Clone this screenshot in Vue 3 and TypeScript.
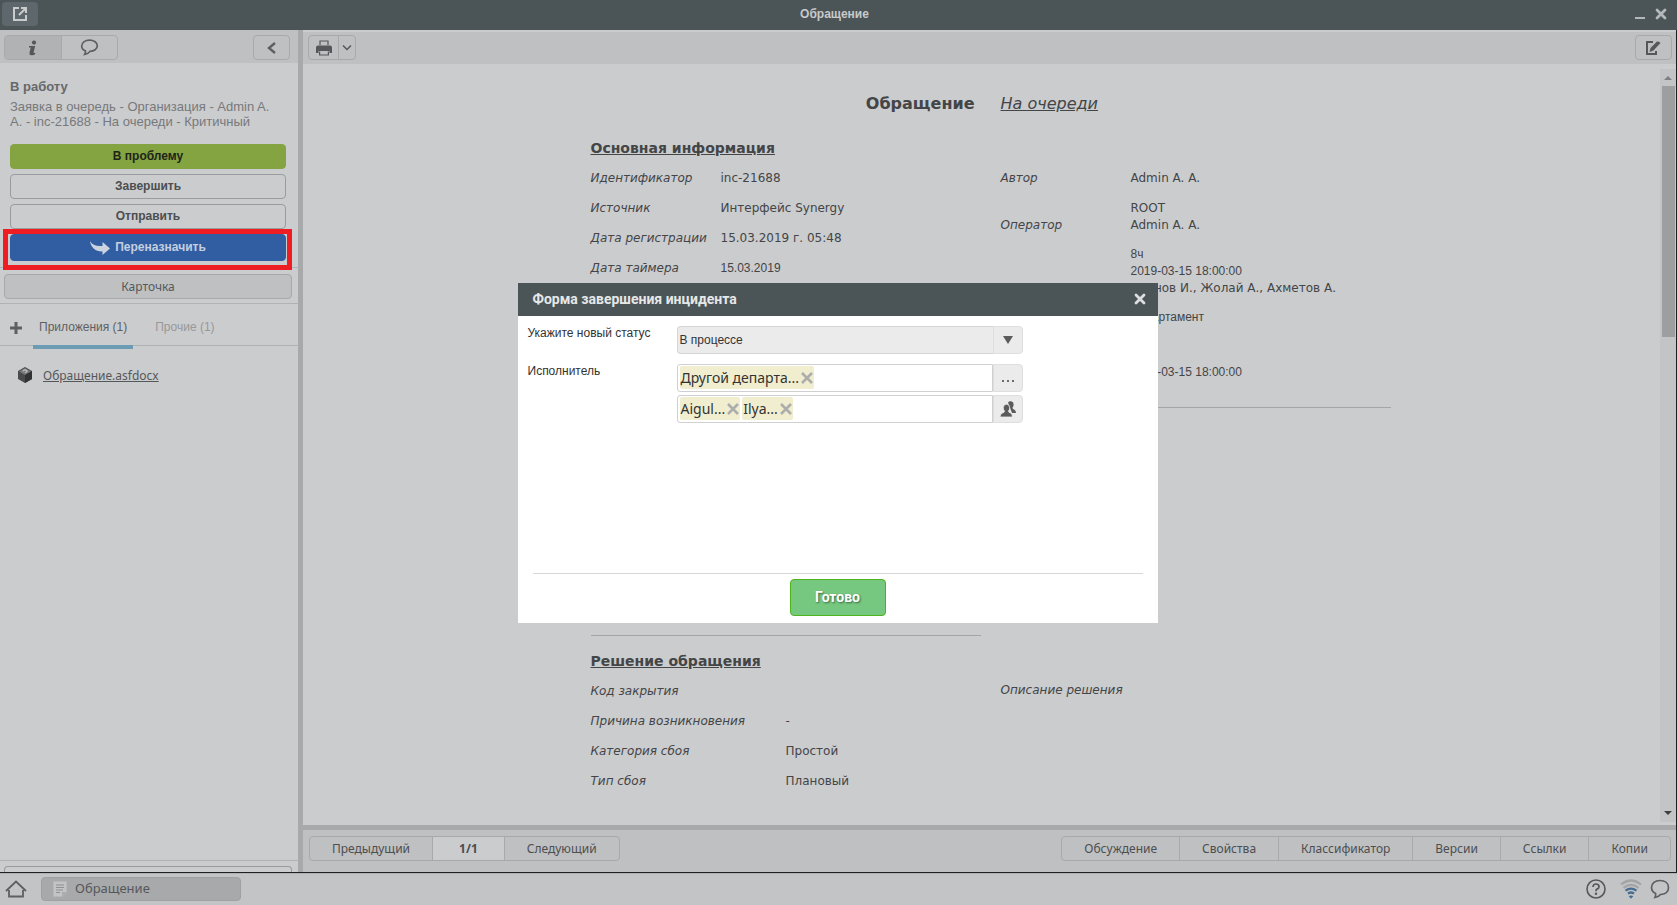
<script setup lang="ts">
import { ref } from 'vue'

interface Field { label: string; value: string; compact?: boolean }

const mainFields: Field[] = [
  { label: 'Идентификатор', value: 'inc-21688' },
  { label: 'Источник', value: 'Интерфейс Synergy' },
  { label: 'Дата регистрации', value: '15.03.2019 г. 05:48' },
  { label: 'Дата таймера', value: '15.03.2019', compact: true },
]
const solutionFields: Field[] = [
  { label: 'Код закрытия', value: '' },
  { label: 'Причина возникновения', value: '-' },
  { label: 'Категория сбоя', value: 'Простой' },
  { label: 'Тип сбоя', value: 'Плановый' },
]
const links = ['Обсуждение', 'Свойства', 'Классификатор', 'Версии', 'Ссылки', 'Копии']
const status = ref('В процессе')
const departments = ref(['Другой департа...'])
const people = ref(['Aigul...', 'Ilya...'])
</script>

<template>
  <div class="app">
    <header class="titlebar">
      <button class="open-btn" aria-label="Открыть в новом окне">
        <svg width="16" height="16" viewBox="0 0 16 16"><path d="M7 2H2v12h12V9M9 2h5v5M14 2 7 9" fill="none" stroke="#c8cacb" stroke-width="2" /></svg>
      </button>
      <h1>Обращение</h1>
      <div class="win-btns">
        <button aria-label="Свернуть"><svg width="12" height="12" viewBox="0 0 12 12"><path d="M1 10h10" stroke="#b4b8ba" stroke-width="2" /></svg></button>
        <button aria-label="Закрыть"><svg width="12" height="12" viewBox="0 0 12 12"><path d="m2 2 8 8M10 2l-8 8" stroke="#b4b8ba" stroke-width="2.8" stroke-linecap="round" /></svg></button>
      </div>
    </header>

    <div class="workspace">
      <aside class="sidebar">
        <div class="side-tools">
          <div class="seg">
            <button class="active" aria-label="Информация">
              <svg width="14" height="16" viewBox="0 0 14 16"><circle cx="8" cy="2.6" r="2.1" fill="#55585b" /><path d="M3 6h6.2L7.6 12.2q-.2 1.1 1.4.6l.4.9Q8 15.600 5 15.200q-2-.4-1.500-2.500L4.700 7.600H3z" fill="#55585b" /></svg>
            </button>
            <button aria-label="Комментарии">
              <svg width="19" height="17" viewBox="0 0 19 17"><path d="M9.500 1.200c4.500 0 7.800 2.400 7.800 5.600s-3.300 5.600-7.300 5.600c-1 1.500-3 2.800-5.300 3 .7-1 .9-2.300.7-3.500-2.300-1-3.700-2.900-3.700-5 0-3.300 3.300-5.700 7.800-5.700z" fill="none" stroke="#5d6063" stroke-width="1.700" /></svg>
            </button>
          </div>
          <button class="collapse" aria-label="Свернуть панель"><svg width="10" height="12" viewBox="0 0 10 12"><path d="M8 1 2 6l6 5" fill="none" stroke="#5d6063" stroke-width="2.400" /></svg></button>
        </div>

        <section class="task">
          <h2>В работу</h2>
          <p>Заявка в очередь - Организация - Admin A. A. - inc-21688 - На очереди - Критичный</p>
          <div class="actions">
            <button class="act green">В проблему</button>
            <button class="act">Завершить</button>
            <button class="act">Отправить</button>
            <div class="marked">
              <button class="act blue">
                <svg width="20" height="14" viewBox="0 0 20 14"><path d="M0 0c2 4 6 5.500 12.500 5V1L20 7.500 12.500 14v-3.500C6 10.800 1 7 0 0z" fill="#cbd3de" /></svg>
                Переназначить
              </button>
            </div>
          </div>
        </section>

        <div class="card-row"><button class="card-btn">Карточка</button></div>

        <nav class="tabs">
          <button class="add" aria-label="Добавить"><svg width="14" height="14" viewBox="0 0 14 14"><path d="M7 1v12M1 7h12" stroke="#5d6063" stroke-width="3" /></svg></button>
          <button class="tab current">Приложения (1)</button>
          <button class="tab">Прочие (1)</button>
        </nav>

        <div class="file">
          <svg width="16" height="18" viewBox="0 0 16 18"><path d="m8 1 7 4v8l-7 4-7-4V5z" fill="#484a4c" /><path d="m8 2 6 3.500L8 9 2 5.500z" fill="#77797b" /><path d="M6 5q2-2 3.500-.5T8 6.500" fill="none" stroke="#c4c5c7" stroke-width="1.200" /><path d="M8 9v8l7-4V5z" fill="#303234" /></svg>
          <a href="#">Обращение.asfdocx</a>
        </div>

        <div class="side-bottom"><div class="stub"></div></div>
      </aside>

      <main class="main">
        <div class="toolbar">
          <div class="seg print">
            <button aria-label="Печать"><svg width="16" height="16" viewBox="0 0 16 16"><path d="M4 5V1h8v4" fill="none" stroke="#55585b" stroke-width="1.200" /><path d="M2 5.500h12q2 0 2 2V13h-2.500v-2h-11v2H0V7.500q0-2 2-2z" fill="#55585b" /><path d="M3.600 11.500v3.500h8.800v-3.500" fill="none" stroke="#55585b" stroke-width="1.200" /></svg></button>
            <button aria-label="Ещё"><svg width="10" height="8" viewBox="0 0 10 8"><path d="m1 1.500 4 4 4-4" fill="none" stroke="#55585b" stroke-width="1.500" /></svg></button>
          </div>
          <button class="edit" aria-label="Редактировать"><svg width="15" height="14" viewBox="0 0 15 14"><path d="M7 1H1v12h9v-3" fill="none" stroke="#55585b" stroke-width="2" /><path d="M3.500 11 4.500 7 11 .6q2-.8 3.500 1.500L7.500 9.500z" fill="#55585b" /></svg></button>
        </div>

        <div class="scroller">
          <article class="doc">
            <div class="doc-head"><strong>Обращение</strong><em>На очереди</em></div>
            <div class="doc-cols">
              <section class="col info">
                <h3>Основная информация</h3>
                <dl class="fields">
                  <template v-for="f in mainFields" :key="f.label">
                    <dt>{{ f.label }}</dt><dd :class="{ compact: f.compact }">{{ f.value }}</dd>
                  </template>
                </dl>
              </section>
              <section class="col">
                <dl class="people">
                  <dt>Автор</dt>
                  <dd><p>Admin A. A.</p><p class="unit">ROOT</p></dd>
                  <dt>Оператор</dt>
                  <dd>
                    <p>Admin A. A.</p>
                    <p class="compact spaced">8ч</p>
                    <p class="compact">2019-03-15 18:00:00</p>
                    <p>Иванов И., Жолай А., Ахметов А.</p>
                    <p class="compact spaced">Департамент</p>
                    <p class="compact late">2019-03-15 18:00:00</p>
                  </dd>
                </dl>
                <hr />
              </section>
            </div>
            <div class="doc-cols">
              <section class="col">
                <hr />
                <h3>Решение обращения</h3>
                <dl class="fields wide">
                  <template v-for="f in solutionFields" :key="f.label">
                    <dt>{{ f.label }}</dt><dd>{{ f.value }}</dd>
                  </template>
                </dl>
              </section>
              <section class="col"><p class="solution">Описание решения</p></section>
            </div>
          </article>
          <div class="scrollbar">
            <svg width="16" height="17" viewBox="0 0 16 17"><path d="m4 11 4-4 4 4z" fill="#7d7f81" /></svg>
            <div class="thumb"></div>
            <svg width="16" height="17" viewBox="0 0 16 17"><path d="m4 6 4 4 4-4z" fill="#3c3e40" /></svg>
          </div>
        </div>

        <footer class="pager">
          <div class="seg pages">
            <button>Предыдущий</button>
            <button class="count">1/1</button>
            <button>Следующий</button>
          </div>
          <div class="seg links">
            <button v-for="l in links" :key="l">{{ l }}</button>
          </div>
        </footer>
      </main>
    </div>

    <footer class="taskbar">
      <button class="home" aria-label="Домой"><svg width="22" height="19" viewBox="0 0 22 19"><path d="M1 12 11 2.500 21 12M4 11v6.500h14V11" fill="none" stroke="#5d6063" stroke-width="1.800" /></svg></button>
      <button class="task-item">
        <svg width="14" height="16" viewBox="0 0 14 16"><path d="M.5.500h13V11L9 15.500H.5z" fill="#c3c4c6" stroke="#b7b8ba" /><path d="M3 4h8M3 6.500h8M3 9h7M3 11.500h4" stroke="#8e9092" /><path d="M9 15.500V11h4.500z" fill="#a9abad" /></svg>
        Обращение
      </button>
      <div class="tray">
        <button aria-label="Справка"><svg width="20" height="20" viewBox="0 0 20 20"><circle cx="10" cy="10" r="9" fill="none" stroke="#55585b" stroke-width="1.600" /><path d="M7 8q0-3 3-3t3 2.700Q13 9.300 11 10.100 10 10.600 10 12.200" fill="none" stroke="#55585b" stroke-width="1.700" /><circle cx="10" cy="14.800" r="1.200" fill="#55585b" /></svg></button>
        <button aria-label="Сеть"><svg width="22" height="20" viewBox="0 0 22 20"><g fill="none" stroke-width="2.200"><path d="M1 5.500q10-8 20 0M3.500 8.800q7.500-6 15 0" stroke="#a2a4a6" /><path d="M5.500 11.600q5.500-4 11 0M8 14.700q3-2.400 6 0" stroke="#486c92" /></g><path d="m8.700 17.300 2.300 2.500 2.300-2.500q-2.300-1.700-4.600 0z" fill="#486c92" /></svg></button>
        <button aria-label="Чат"><svg width="20" height="20" viewBox="0 0 20 20"><path d="M10 1.500c5 0 8.500 2.800 8.500 7s-3.300 7-8 7c-1.300 1.700-3 2.700-5.500 3 .7-1.300.8-2.600.6-4C3 13.200 1.500 11 1.500 8.500c0-4.200 3.500-7 8.500-7z" fill="none" stroke="#5d6063" stroke-width="1.700" /></svg></button>
      </div>
    </footer>

    <div class="dialog" role="dialog" aria-labelledby="dlg-title">
      <header>
        <h2 id="dlg-title">Форма завершения инцидента</h2>
        <button aria-label="Закрыть окно"><svg width="12" height="12" viewBox="0 0 12 12"><path d="m2 2 8 8M10 2l-8 8" stroke="#dcdedf" stroke-width="2.800" stroke-linecap="round" /></svg></button>
      </header>
      <form @submit.prevent>
        <label class="lbl" for="status">Укажите новый статус</label>
        <div class="select">
          <select id="status" v-model="status"><option>В процессе</option></select>
          <span class="side"><svg width="10" height="8" viewBox="0 0 10 8"><path d="M0 0h10L5 8z" fill="#5b5b5b" /></svg></span>
        </div>
        <label class="lbl" for="dept">Исполнитель</label>
        <div class="pickers">
          <div class="picker">
            <div class="box">
              <span v-for="d in departments" :key="d" class="tag">{{ d }}<button type="button" aria-label="Удалить"><svg width="12" height="12" viewBox="0 0 12 12"><path d="m1 1 10 10M11 1 1 11" stroke="#adadab" stroke-width="2.600" /></svg></button></span>
              <input id="dept" type="text" />
            </div>
            <button type="button" class="side" aria-label="Выбрать подразделение"><svg width="12" height="10" viewBox="0 0 12 10"><path d="M0 7h2v2H0zM5 7h2v2H5zM10 7h2v2h-2z" fill="#6b6b6b" /></svg></button>
          </div>
          <div class="picker">
            <div class="box">
              <span v-for="p in people" :key="p" class="tag">{{ p }}<button type="button" aria-label="Удалить"><svg width="12" height="12" viewBox="0 0 12 12"><path d="m1 1 10 10M11 1 1 11" stroke="#adadab" stroke-width="2.600" /></svg></button></span>
              <input type="text" aria-label="Исполнители" />
            </div>
            <button type="button" class="side" aria-label="Выбрать пользователей"><svg width="16" height="16" viewBox="0 0 16 16"><path d="M8 1.500Q9 0 11 .2q3 .5 2.500 4.300-.3 1.500-1 2.300 0 1.300 1.500 1.700 2 .7 2 3.500h-4z" fill="#5b5b5b" /><path d="M6.500 3.200q3.200 0 3.200 3.600 0 2-1.200 3.200 0 1.500 2 2 2 .8 2 4H0q0-3.200 2.500-4 2-.5 2-2Q3.300 8.800 3.300 6.800q0-3.600 3.200-3.600z" fill="#5b5b5b" stroke="#ebebeb" stroke-width=".8" /></svg></button>
          </div>
        </div>
      </form>
      <div class="dialog-foot"><button>Готово</button></div>
    </div>
  </div>
</template>

<style>
body { margin: 0; }
</style>

<style scoped>
* { box-sizing: border-box; }
h1, h2, h3, p, dl, dd, dt, hr { margin: 0; }
button { font: inherit; color: inherit; background: none; border: 0; padding: 0; display: flex; align-items: center; justify-content: center; }
.app { position: relative; height: 100vh; display: flex; flex-direction: column; overflow: hidden; background: #cbccce; color: #66686a; font: 13px/15px "Liberation Sans", Arial, sans-serif; }

.titlebar { flex: none; height: 30px; display: grid; grid-template-columns: 1fr auto 1fr; align-items: center; padding: 0 10px 2px 2px; background: #4b5457; }
.titlebar h1 { font: bold 12px/16px "Liberation Sans", sans-serif; color: #c8cacb; }
.open-btn { width: 36px; height: 24px; border-radius: 4px; background: #5e676c; }
.win-btns { display: flex; gap: 9px; justify-content: flex-end; }

.workspace { flex: 1; min-height: 0; display: flex; border-right: 1px solid #1d1f20; border-bottom: 1px solid #1d1f20; }
.sidebar { flex: none; width: 303px; display: flex; flex-direction: column; border-right: 5px solid #a8a9ab; }
.side-tools { height: 33px; display: flex; justify-content: space-between; align-items: center; padding: 2px 8px 0 4px; background: #bfc0c2; }
.seg { display: flex; height: 25px; border: 1px solid #a8a9ab; border-radius: 4px; overflow: hidden; }
.seg button + button { border-left: 1px solid #a8a9ab; }
.side-tools .seg button { width: 56px; }
.seg .active { background: #b1b2b4; }
.collapse, .edit { width: 37px; height: 25px; border: 1px solid #a8a9ab; border-radius: 4px; }

.task { padding: 16px 12px 6px 10px; border-bottom: 1px solid #b1b2b4; }
.task h2 { font: bold 13px/15px "Liberation Sans", sans-serif; }
.task p { margin-top: 5px; padding-right: 8px; color: #77797b; }
.actions { display: flex; flex-direction: column; gap: 5px; margin-top: 15px; }
.act { width: 100%; height: 25px; border: 1px solid #9a9b9d; border-radius: 4px; font-weight: bold; font-size: 12px; color: #4c4e50; }
.act.green { background: #84a442; border-color: #84a442; color: #1f2418; }
.act.blue { height: 27px; gap: 5px; background: #315ea3; border-color: #315ea3; color: #c5cfdf; }
.marked { position: relative; }
.marked::after { content: ""; position: absolute; inset: -5px -6px -9px -7px; border: 5px solid #ee1c23; pointer-events: none; }
.card-row { padding: 6px 6px 4px 4px; border-bottom: 1px solid #b1b2b4; }
.card-btn { width: 100%; height: 25px; border: 1px solid #a8a9ab; border-radius: 4px; background: #bfc0c2; font-family: "Noto Sans", sans-serif; font-size: 12px; color: #55585b; }
.tabs { display: flex; height: 42px; padding-left: 9px; border-bottom: 1px solid #b1b2b4; }
.tabs .add { width: 14px; margin-right: 10px; padding-top: 6px; }
.tab { height: 45px; padding: 6px 6px 0; border-bottom: 4px solid transparent; font-size: 12px; color: #97989a; }
.tab + .tab { padding-left: 22px; }
.tab.current { border-color: #6b9cb3; color: #5d6063; }
.file { display: flex; align-items: center; gap: 10px; padding: 20px 0 0 17px; }
.file a { color: #55585b; font: 12px/17px "Noto Sans", sans-serif; }
.side-bottom { margin-top: auto; padding: 5px 6px 0 4px; border-top: 1px solid #b1b2b4; }
.stub { height: 6px; border: 1px solid #9a9b9d; border-bottom: 0; border-radius: 4px 4px 0 0; }

.main { flex: 1; min-width: 0; display: flex; flex-direction: column; }
.toolbar { flex: none; height: 34px; display: flex; justify-content: space-between; align-items: center; padding: 0 4px 1px 5px; border-top: 2px solid #cbccce; background: #bfc0c2; }
.print button { width: 29px; }
.print button + button { width: 17px; }
.scroller { flex: 1; min-height: 0; display: flex; }
.scrollbar { flex: none; width: 16px; margin: 5px 0 3px; display: flex; flex-direction: column; background: #c3c4c6; }
.thumb { height: 251px; margin: 0 1px 0 2px; background: #9d9ea0; }
.scrollbar svg { flex: none; }
.scrollbar svg:last-child { margin-top: auto; }
.doc { width: 822px; margin: 0 auto; padding: 29px 2px 0 20px; font: 12px/17px "DejaVu Sans", Verdana, sans-serif; color: #434547; }
.doc-head { display: grid; grid-template-columns: 384px 1fr; gap: 26px; height: 22px; font-size: 16px; line-height: 22px; }
.doc-head strong { text-align: right; }
.doc-head em { text-decoration: underline; }
.doc-cols { display: grid; grid-template-columns: 1fr 1fr; gap: 20px; }
.col hr { border: 0; border-top: 1px solid #a4a5a7; }
h3 { font-size: 14px; line-height: 20px; text-decoration: underline; }
.info h3 { margin-top: 23px; }
.fields { display: grid; grid-template-columns: 130px 1fr; grid-auto-rows: 30px; align-items: center; margin-top: 5px; }
.fields.wide { grid-template-columns: 195px 1fr; }
dt, .solution { font-style: italic; }
.compact { font-family: "Liberation Sans", Arial, sans-serif; }
.people { display: grid; grid-template-columns: 130px 1fr; margin-top: 55px; }
.unit { margin-top: 13px; }
.spaced { margin-top: 12px; }
.late { margin-top: 38px; }
.people + hr { margin-top: 26px; }
.doc-cols + .doc-cols { margin-top: 227px; }
hr + h3 { margin-top: 15px; }
.solution { margin-top: 47px; }

.pager { flex: none; height: 47px; display: flex; justify-content: space-between; align-items: center; padding: 0 5px 6px 6px; border-top: 5px solid #a8a9ab; background: #bfc0c2; font-family: "Noto Sans", sans-serif; font-size: 12px; color: #4c4e50; }
.pages button, .links button { padding: 0 22px; }
.pages .count { padding: 0 26px; background: #cbccce; font-weight: bold; }

.taskbar { flex: none; height: 32px; display: flex; align-items: center; padding: 0 7px 2px 5px; border-top: 1px solid #b1b2b4; background: #c3c4c6; }
.task-item { justify-content: flex-start; gap: 8px; width: 200px; height: 24px; margin-left: 14px; padding-left: 11px; border: 1px solid #9fa0a2; border-radius: 4px; background: #a8a9ab; font-family: "Noto Sans", sans-serif; color: #55585b; }
.tray { display: flex; gap: 14px; margin-left: auto; }
.tray button:last-child { margin-left: -6px; }

.dialog { position: absolute; top: 50%; left: 50%; width: 640px; height: 340px; margin: -170px 0 0 -321px; display: flex; flex-direction: column; background: #fff; color: #333; }
.dialog header { height: 33px; display: flex; align-items: center; justify-content: space-between; padding: 0 12px 0 15px; background: #4b5457; }
.dialog h2 { font: bold 14px/20px Roboto, sans-serif; color: #e6e8e8; }
form { flex: 1; display: grid; grid-template-columns: 149px 346px; align-content: start; row-gap: 10px; padding: 10px; }
.lbl { font-size: 12px; line-height: 14px; }
.select, .picker { display: flex; height: 28px; }
select { flex: 1; appearance: none; border: 1px solid #d4d4d4; border-right: 0; border-radius: 4px 0 0 4px; background: #ebebeb; color: #333; padding: 0 2px; font: 12px/16px "Liberation Sans", sans-serif; }
.side { flex: none; width: 30px; border: 1px solid #dedede; border-radius: 0 4px 4px 0; background: #ebebeb; display: flex; align-items: center; justify-content: center; }
.pickers { display: flex; flex-direction: column; gap: 3px; }
.box { flex: 1; min-width: 0; display: flex; align-items: center; gap: 2px; padding: 0 2px; border: 1px solid #d0d0d0; border-radius: 3px 0 0 3px; }
.tag { flex: none; display: flex; align-items: center; gap: 2px; height: 23px; padding: 0 1px; border-radius: 2px; background: #f1edcf; font: 14px/22px "Noto Sans", sans-serif; }
.box input { flex: 1; min-width: 0; border: 0; outline: 0; }
.dialog-foot { display: flex; justify-content: center; margin: 0 15px; padding: 5px 0 7px; border-top: 1px solid #d8d8d8; }
.dialog-foot button { width: 96px; height: 37px; border: 1px solid #4db31e; border-radius: 4px; background: #76c780; color: #fff; font: bold 14px/20px Roboto, sans-serif; text-shadow: 1px 1px 2px #3a6b3f; }
</style>
